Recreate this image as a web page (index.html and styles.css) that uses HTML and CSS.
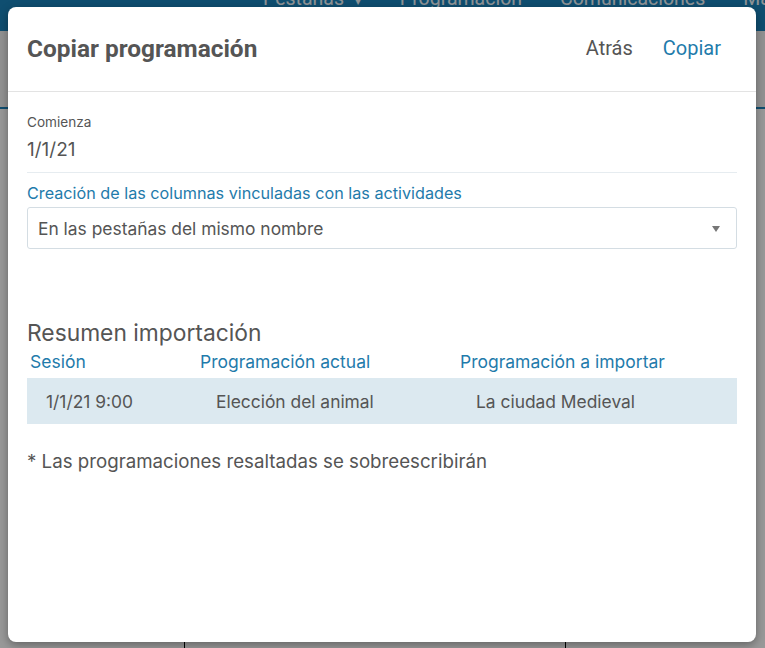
FILE: index.html
```html
<!DOCTYPE html>
<html lang="es">
<head>
<meta charset="utf-8">
<title>Copiar programación</title>
<link rel="stylesheet" href="styles.css">
</head>
<body>
<div class="page">
  <header class="navbar">
    <nav class="nav-links">
      <span class="nav-item nav-pest">Pestañas <span class="caret">▾</span></span>
      <span class="nav-item">Programación</span>
      <span class="nav-item">Comunicaciones</span>
      <span class="nav-item">Ma</span>
    </nav>
  </header>
  <div class="subbar"></div>
  <div class="content">
    <div class="col col-a"></div>
    <div class="col col-b"></div>
    <div class="col col-c"></div>
  </div>
</div>
<div class="backdrop"></div>
<div class="modal">
  <div class="modal-header">
    <h1 class="modal-title">Copiar programación</h1>
    <div class="actions">
      <button class="btn btn-back">Atrás</button>
      <button class="btn btn-copy">Copiar</button>
    </div>
  </div>
  <div class="modal-body">
    <div class="field-label">Comienza</div>
    <div class="field-value">1/1/21</div>
    <div class="sep"></div>
    <div class="link-label">Creación de las columnas vinculadas con las actividades</div>
    <div class="select">
      <span>En las pestañas del mismo nombre</span>
      <span class="arrow"></span>
    </div>
    <h2 class="summary-title">Resumen importación</h2>
    <div class="table">
      <div class="th">Sesión</div>
      <div class="th">Programación actual</div>
      <div class="th">Programación a importar</div>
      <div class="td">1/1/21 9:00</div>
      <div class="td">Elección del animal</div>
      <div class="td">La ciudad Medieval</div>
    </div>
    <p class="note">* Las programaciones resaltadas se sobreescribirán</p>
  </div>
</div>
</body>
</html>
```
FILE: styles.css
```css
* { box-sizing: border-box; }
html, body { margin: 0; padding: 0; }
body {
  width: 765px;
  height: 648px;
  overflow: hidden;
  background: #fff;
  font-family: Inter, "Noto Sans", sans-serif;
  position: relative;
}
.page { height: 648px; display: flex; flex-direction: column; }
.navbar {
  height: 31px;
  background: #1983bb;
  overflow: hidden;
}
.nav-links {
  display: flex;
  margin-top: -13px;
  padding-left: 263px;
  font-family: Roboto, sans-serif;
  font-size: 19.5px;
  line-height: 24px;
  color: #eef5fa;
  white-space: nowrap;
}
.nav-item { margin-right: 38px; }
.nav-pest { margin-right: 39px; }
.caret { font-size: 12px; margin-left: 6px; }
.subbar {
  height: 78px;
  background: #f4f4f4;
  border-bottom: 2px solid #1983bb;
}
.content { flex: 1; display: grid; grid-template-columns: 184px 381px 1fr; }
.col { border-left: 1px solid #000; }
.col-a { border-left: none; }

.backdrop {
  position: absolute;
  inset: 0;
  background: rgba(0, 0, 0, 0.4);
}
.modal {
  position: absolute;
  top: 7px;
  left: 8px;
  width: 748px;
  height: 635px;
  background: #fff;
  border-radius: 8px;
  box-shadow: 0 3px 10px rgba(0, 0, 0, 0.35);
  overflow: hidden;
}
.modal-header {
  height: 85px;
  border-bottom: 1px solid #e3e3e3;
  display: flex;
  align-items: center;
  justify-content: space-between;
  padding: 0 20px 2px 19px;
}
.modal-title {
  margin: 0;
  font-family: Roboto, sans-serif;
  font-weight: 700;
  font-size: 24.4px;
  color: #555;
}
.actions { display: flex; }
.btn {
  border: none;
  background: none;
  font-family: Roboto, sans-serif;
  font-size: 20px;
  padding: 0 15px;
  cursor: pointer;
}
.btn-back { color: #555; margin-right: 0; }
.btn-copy { color: #1f7bab; }

.modal-body { padding: 20px 19px; color: #555; }
.field-label { font-size: 13.6px; line-height: 20px; }
.field-value { font-size: 19px; line-height: 24px; margin-top: 6px; }
.sep { margin-top: 10px; border-top: 1px solid #e6ecf0; }
.link-label {
  margin-top: 10px;
  font-size: 16.2px;
  line-height: 20px;
  color: #1f7bab;
}
.select {
  margin-top: 4px;
  height: 42px;
  border: 1px solid #d4dde3;
  border-radius: 3px;
  display: flex;
  align-items: center;
  justify-content: space-between;
  padding: 0 16px 0 10px;
  font-size: 17.4px;
  color: #555;
}
.arrow {
  width: 0;
  height: 0;
  border-left: 4px solid transparent;
  border-right: 4px solid transparent;
  border-top: 6px solid #777;
  margin-top: 2px;
}
.summary-title {
  margin: 70px 0 0;
  font-weight: 400;
  font-size: 22.8px;
  line-height: 28px;
  color: #555;
}
.table {
  margin-top: 4px;
  display: grid;
  grid-template-columns: 170px 260px 1fr;
}
.th {
  font-size: 17.5px;
  line-height: 22px;
  padding: 0 0 5px 3px;
  color: #1f7bab;
}
.td {
  background: #dce9f0;
  height: 46px;
  display: flex;
  align-items: center;
  padding-left: 19px;
  font-size: 17.4px;
  color: #555;
}
.note {
  margin: 26px 0 0;
  font-size: 18.7px;
  line-height: 24px;
  color: #555;
}
```
